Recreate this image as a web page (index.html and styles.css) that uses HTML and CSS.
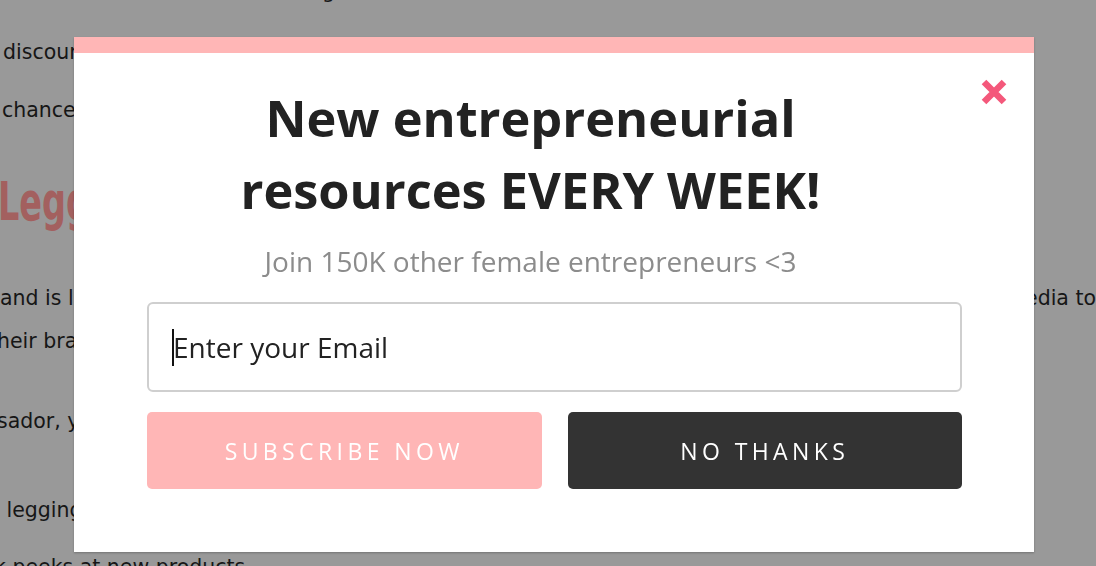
FILE: index.html
```html
<!DOCTYPE html>
<html>
<head>
  <title>Newsletter</title>
  <link rel="stylesheet" href="styles.css">
</head>
<body>
  <div class="page">
    <p class="line first">ead the word about them through social media</p>
    <p class="line discount">discounts for your followers and fans</p>
    <p class="line chance">chance to get free products every month</p>
    <h2 class="page-heading">Leggings Ambassador</h2>
    <p class="line split"><span>and is looking for women who love social media to</span><span>edia to</span></p>
    <p class="line their">heir brand with their audience</p>
    <p class="line sador">sador, you will receive</p>
    <p class="line leggin">&nbsp;leggings of your choice</p>
    <p class="line peeks">k peeks at new products</p>
  </div>

  <div class="overlay">
    <div class="modal">
      <button class="close" aria-label="Close">
        <svg width="28" height="28" viewBox="0 0 28 28">
          <path d="M4 4 L24 24 M24 4 L4 24" stroke="#f4587b" stroke-width="6.5" fill="none"/>
        </svg>
      </button>
      <div class="intro">
        <h1 class="title">New entrepreneurial<br>resources EVERY WEEK!</h1>
        <p class="subtitle">Join 150K other female entrepreneurs &lt;3</p>
      </div>
      <label class="field">
        <input type="email" placeholder="Enter your Email">
      </label>
      <div class="actions">
        <button class="btn subscribe">Subscribe Now</button>
        <button class="btn dismiss">No Thanks</button>
      </div>
    </div>
  </div>
</body>
</html>
```

FILE: styles.css
```css
body {
  margin: 0;
  padding: 0;
  background-color: #999;
  font-family: "DejaVu Sans", sans-serif;
  color: #161616;
  overflow: hidden;
  height: 566px;
}

/* page behind the popup */
.line {
  margin: 0;
  font-size: 20.5px;
  line-height: 43px;
  white-space: nowrap;
}

.first {
  margin-top: -30px;
}

.discount {
  margin-top: 18px;
  padding-left: 3px;
}

.chance {
  margin-top: 15px;
  padding-left: 2px;
}

.page-heading {
  display: inline-block;
  margin: 40px 0 0 -2px;
  font-family: "DejaVu Sans", sans-serif;
  font-size: 54px;
  font-weight: bold;
  color: #a3605f;
  line-height: 60px;
  white-space: nowrap;
  transform: scaleX(0.62);
  transform-origin: left center;
}

.split {
  display: flex;
  justify-content: space-between;
  margin-top: 45px;
}

.their {
  margin-left: -3px;
}

.sador {
  margin-top: 37px;
  margin-left: -3px;
}

.leggin {
  margin-top: 46px;
}

.peeks {
  margin-top: 14px;
  margin-left: -6px;
}

/* popup */
.overlay {
  position: fixed;
  top: 0;
  left: 0;
  right: 0;
  bottom: 0;
  padding: 37px 0 0 74px;
}

.modal {
  position: relative;
  box-sizing: border-box;
  width: 960px;
  height: 515px;
  background-color: #fff;
  border-top: 16px solid #ffb6b6;
  padding: 29px 72px 0 73px;
  box-shadow: 0 1px 2px rgba(0,0,0,0.25);
  font-family: "Open Sans", sans-serif;
}

.close {
  position: absolute;
  top: 25px;
  right: 26px;
  padding: 0;
  border: none;
  background: none;
  width: 28px;
  height: 28px;
  cursor: pointer;
}

.close svg {
  display: block;
}

.intro {
  padding-right: 48px;
  text-align: center;
}

.title {
  margin: 0;
  font-size: 50.5px;
  font-weight: 700;
  line-height: 72px;
  color: #222;
}

.subtitle {
  margin: 17px 0 0;
  font-size: 28px;
  line-height: 36px;
  color: #8c8c8c;
}

.field {
  display: block;
  position: relative;
  margin-top: 23px;
}

.field::before {
  content: "";
  position: absolute;
  left: 25px;
  top: 27px;
  width: 2px;
  height: 37px;
  background-color: #111;
}

.field input {
  display: block;
  box-sizing: border-box;
  width: 100%;
  height: 90px;
  padding: 0 24px;
  border: 2px solid #cfcfcf;
  border-radius: 6px;
  font-family: "Open Sans", sans-serif;
  font-size: 28px;
  color: #222;
  outline: none;
}

.field input::placeholder {
  color: #222;
  opacity: 1;
}

.actions {
  display: flex;
  gap: 26px;
  margin-top: 20px;
}

.btn {
  flex: 1;
  height: 77px;
  border: none;
  border-radius: 5px;
  font-family: "Open Sans", sans-serif;
  font-size: 23px;
  letter-spacing: 4.4px;
  text-transform: uppercase;
  color: #fff;
  cursor: pointer;
}

.subscribe {
  background-color: #ffb6b6;
}

.dismiss {
  background-color: #333;
}
```
